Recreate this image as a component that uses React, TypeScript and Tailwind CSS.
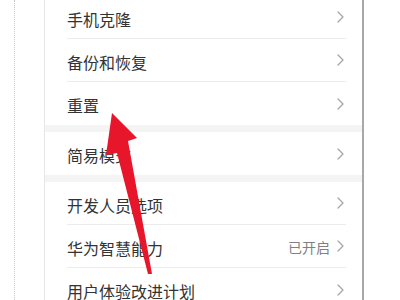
import React from 'react';

type Row = { label: string; value?: string };

const groups: Row[][] = [
    [{ label: '手机克隆' }, { label: '备份和恢复' }, { label: '重置' }],
    [{ label: '简易模式' }],
    [{ label: '开发人员选项' }, { label: '华为智慧能力', value: '已开启' }, { label: '用户体验改进计划' }],
];

const Chevron = () => (
    <svg width="7" height="12" viewBox="0 0 7 12" fill="none" className="shrink-0">
        <path d="M1 1l5 5-5 5" stroke="#a6a6a6" strokeWidth="1.3" strokeLinecap="round" strokeLinejoin="round" />
    </svg>
);

const SettingRow = ({ row, last }: { row: Row; last: boolean }) => (
    <div className="pl-[22px] pr-[16px]">
        <div className={`flex h-[43px] items-center ${last ? '' : 'border-b border-[#ececec]'}`}>
            <span className="flex-1 pt-[3px] text-[16px] text-[#333333]">{row.label}</span>
            {row.value && <span className="mr-[7px] pt-[2px] text-[14px] text-[#808080]">{row.value}</span>}
            <div className="pr-[2px]">
                <Chevron />
            </div>
        </div>
    </div>
);

export default function App() {
    return (
        <div
            className="relative flex h-[300px] w-[400px] overflow-hidden bg-white"
            style={{ fontFamily: '"Noto Sans CJK SC", "Noto Sans", sans-serif' }}
        >
            <div className="w-[14px] shrink-0" />
            <div className="w-0 shrink-0 border-l border-dotted border-[#c8c8c8]" />
            <div className="w-[29px] shrink-0" />
            <div className="w-[320px] shrink-0 border-l border-r-2 border-l-[#e6e6e6] border-r-[#a8a8a8]">
                <div className="-mt-[4px] flex flex-col">
                    {groups.map((group, gi) => (
                        <React.Fragment key={gi}>
                            {gi > 0 && <div className="h-[7px] bg-[#f4f4f4]" />}
                            {group.map((row, ri) => (
                                <SettingRow key={row.label} row={row} last={ri === group.length - 1} />
                            ))}
                        </React.Fragment>
                    ))}
                </div>
            </div>
            <svg className="pointer-events-none absolute left-0 top-0" width="400" height="300" viewBox="0 0 400 300">
                <polygon
                    points="112,113 137,138 128,141 152,274 148,274 117,153 106,155"
                    fill="#e8162a"
                />
            </svg>
        </div>
    );
}
